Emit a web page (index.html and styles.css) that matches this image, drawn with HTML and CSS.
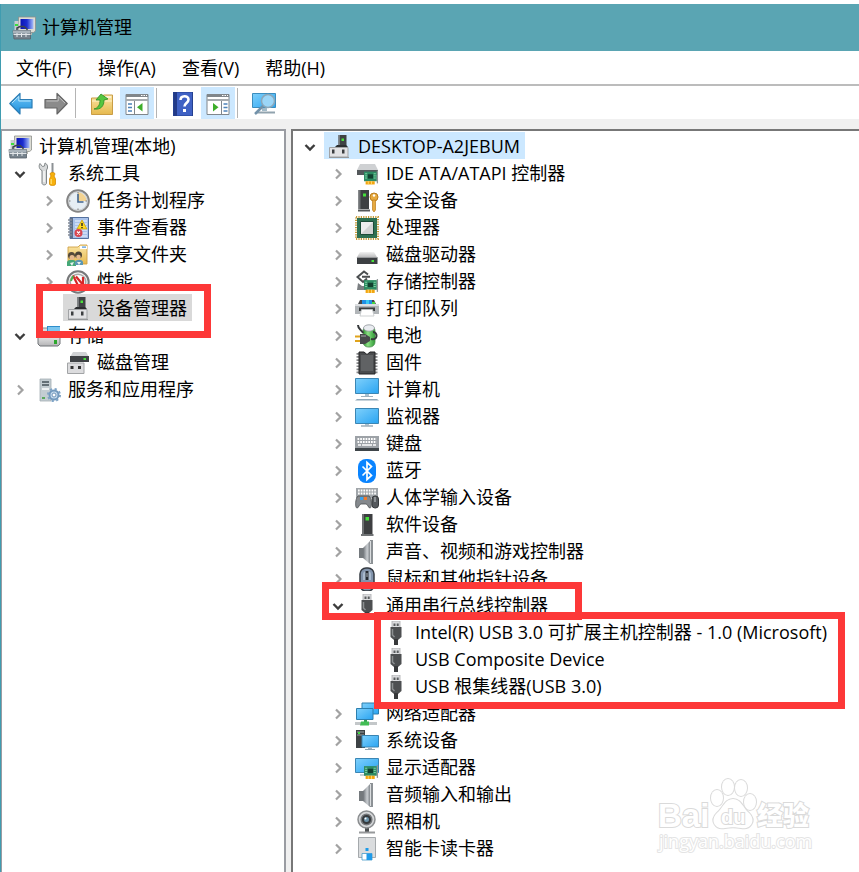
FILE: index.html
```html
<!DOCTYPE html>
<html lang="zh-CN">
<head>
  <meta charset="utf-8">
  <meta name="viewport" content="width=device-width, initial-scale=1">
  <title>计算机管理</title>
  <link rel="stylesheet" href="styles.css">
</head>
<body>

<!-- icon sprite -->
<svg class="sprite" aria-hidden="true">
  <defs>
    <linearGradient id="g-screen" x1="0" y1="0" x2="1" y2="1">
      <stop offset="0" stop-color="#7fd0fb"/><stop offset="1" stop-color="#29a4f2"/>
    </linearGradient>
    <linearGradient id="g-blue" x1="0" y1="0" x2="0" y2="1">
      <stop offset="0" stop-color="#6fc6f7"/><stop offset="1" stop-color="#1c8fdc"/>
    </linearGradient>
    <linearGradient id="g-navy" x1="0" y1="0" x2="1" y2="0">
      <stop offset="0" stop-color="#0a14b4"/><stop offset=".5" stop-color="#1c2ed0"/><stop offset="1" stop-color="#a9c0f8"/>
    </linearGradient>
    <linearGradient id="g-gray" x1="0" y1="0" x2="0" y2="1">
      <stop offset="0" stop-color="#f2f2f2"/><stop offset="1" stop-color="#b4b4b6"/>
    </linearGradient>
    <linearGradient id="g-steel" x1="0" y1="0" x2="1" y2="0">
      <stop offset="0" stop-color="#6c7176"/><stop offset=".6" stop-color="#c9cdd1"/><stop offset="1" stop-color="#83888d"/>
    </linearGradient>
    <linearGradient id="g-green" x1="0" y1="0" x2="1" y2="0">
      <stop offset="0" stop-color="#2d8f2f"/><stop offset=".4" stop-color="#8be084"/><stop offset="1" stop-color="#2f9a35"/>
    </linearGradient>
    <linearGradient id="g-folder" x1="0" y1="0" x2="0" y2="1">
      <stop offset="0" stop-color="#fbe6a6"/><stop offset="1" stop-color="#e6b94e"/>
    </linearGradient>
  </defs>

  <symbol id="closed" viewBox="0 0 12 12"><path d="M4 1.500 8.500 6 4 10.500" fill="none" stroke="#a2a2a2" stroke-width="2.200"/></symbol>
  <symbol id="open" viewBox="0 0 12 12"><path d="M1.500 4 6 8.500 10.500 4" fill="none" stroke="#3c3c3c" stroke-width="2.400"/></symbol>

  <symbol id="manage" viewBox="0 0 24 24">
    <path d="M6.500 1h17v14l-2 1.500H8L6.500 15z" fill="#dcdcd4" stroke="#8d8f8c" stroke-width=".8"/>
    <path d="M8.500 3h13v10h-13z" fill="url(#g-navy)"/>
    <path d="M10 17h10v2H10z" fill="#b4b4ae"/>
    <path d="M2.500 5h4v9h-4z" fill="#c9ccd0"/><path d="M3 8h3v2H3z" fill="#3be03b"/>
    <path d="M5 14v-2l3-1.500h4L15 13v2" fill="none" stroke="#3d454c" stroke-width="1.500"/>
    <path d="M1 14.500h17.500v8.500H2z" fill="#77838d" stroke="#56616a" stroke-width=".8"/>
    <path d="M1 14.500h17.500v3H1z" fill="#a9b3bb"/>
    <path d="M1.500 18.500h17M5 17v4M9.500 17v4M14 17v4" stroke="#e2e6e9" stroke-width="1"/>
  </symbol>

  <symbol id="tools" viewBox="0 0 24 24">
    <path d="M3 1.500 5.500 4.500 7.500 4 8 1c2.500 1 3.500 4.500 1.500 7v13c0 2.500-4.500 2.500-4.500 0V8.500C2 7.500 1.500 3.500 3 1.500z" fill="#d7d9da" stroke="#818688"/>
    <path d="M7 9v11" stroke="#fff" stroke-width="1.200"/>
    <path d="M15.500 1v10" stroke="#8c9194" stroke-width="2"/>
    <path d="M13 12c0-2 5-2 5 0l-1 2 1.500 3v5c0 2-6 2-6 0v-5l1.500-3z" fill="#f7b10c" stroke="#d48a00" stroke-width=".8"/>
    <path d="M14.200 17v5" stroke="#ffe178" stroke-width="1.200"/>
  </symbol>

  <symbol id="clock" viewBox="0 0 24 24">
    <circle cx="12" cy="12" r="10.800" fill="#dde7ee" stroke="#858585" stroke-width="2"/>
    <circle cx="12" cy="12" r="9.300" fill="#e6eef4" stroke="#c4c4c4" stroke-width=".8"/>
    <path d="M12 12V3.500a8.500 8.500 0 0 1 8.500 8.500z" fill="#f4d391"/>
    <path d="M12 5v8h5.500" fill="none" stroke="#41648d" stroke-width="1.600"/>
    <path d="M12 3v1.500M12 19.500V21M3 12h1.500M19.500 12H21" stroke="#777"/>
  </symbol>

  <symbol id="events" viewBox="0 0 24 24">
    <path d="M4 1.500h18.500v21H4z" fill="#a9c2ea" stroke="#54719f"/>
    <path d="M9 5h12M9 8h12M9 11h12M9 14h12M9 17h12M9 20h12" stroke="#eef4ff"/>
    <path d="M4 1.500h3v21H4z" fill="#5d6f8c"/>
    <path d="M2 4h4M2 7h4M2 10h4M2 13h4M2 16h4M2 19h4" stroke="#848b96" stroke-width="1.300"/>
    <path d="M16 4l5 9H11z" fill="#ffd91e" stroke="#c79b00" stroke-width=".7"/>
    <path d="M16 7v3M16 11v1.300" stroke="#222" stroke-width="1.400"/>
    <circle cx="12.500" cy="17" r="4" fill="#d8454f"/><path d="M11 15.500l3 3m0-3-3 3" stroke="#fff" stroke-width="1.200"/>
  </symbol>

  <symbol id="share" viewBox="0 0 24 24">
    <path d="M2 4h10l2-2h7v19H2z" fill="url(#g-folder)" stroke="#cfa045" stroke-width=".9"/>
    <path d="M14 3h7v3h-7z" fill="#fff"/><path d="M16 3.500h4v1.200h-4z" fill="#4c92d8"/>
    <path d="M1 23v-4c1-3 8-3 9 0v4z" fill="#45a878"/><path d="M9 22v-3c1-3 7-3 8 0v3z" fill="#5b97b4"/>
    <path d="M4 20l2 3 2-4zM11 19l2 3 2-3z" fill="#e9f2ee"/>
    <circle cx="5.500" cy="12.500" r="3.500" fill="#54493a"/><circle cx="6" cy="14.500" r="2.500" fill="#e5b98d"/>
    <circle cx="12.500" cy="12" r="3.500" fill="#4b4336"/><circle cx="12.500" cy="14" r="2.300" fill="#e5b98d"/>
  </symbol>

  <symbol id="perf" viewBox="0 0 24 24">
    <circle cx="12" cy="12" r="10.700" fill="#f2f2f0" stroke="#77787a" stroke-width="2"/>
    <circle cx="12" cy="12" r="7.800" fill="#fff" stroke="#a9a9a9" stroke-width="1.500"/>
    <path d="M7 5.500l6 12M10 6.500l8 9.500M17 7v10" fill="none" stroke="#d62727" stroke-width="2.200"/>
    <path d="M5 11l2-5" stroke="#4bb24c" stroke-width="2"/>
  </symbol>

  <symbol id="device" viewBox="0 0 24 24">
    <path d="M11.500 0h8v12h-8z" fill="#3f4244"/><path d="M11.500 0h1.500v12h-1.500z" fill="#777a7c"/>
    <path d="M14.500 3.500H17V6h-2.500z" fill="#4be23c"/>
    <path d="M10 10h9l2 2H8z" fill="#2c2e30"/>
    <path d="M2.500 12.500h18.500V22H2.500z" fill="#e2e2e4" stroke="#a2a4a6"/>
    <path d="M5 14.500h2.500v4H5zM15 14.500h2.500v4H15z" fill="#3c3e40"/>
    <path d="M2 22.500h20" stroke="#96989a" stroke-width="1"/>
  </symbol>

  <symbol id="storage" viewBox="0 0 24 24">
    <path d="M2 8l3-4h8l3 4v4H2z" fill="#d8dadc" stroke="#85888b"/>
    <path d="M10 2h13v9H10z" fill="#2e8ecb"/><path d="M11 3h12v4H11z" fill="#7cc6ef"/>
    <path d="M1 10h22v10l-2 2H3l-2-2z" fill="url(#g-gray)" stroke="#717478"/>
    <path d="M17 16h3v4h-3z" fill="#2da82d"/>
  </symbol>

  <symbol id="diskmgmt" viewBox="0 0 24 24">
    <path d="M7 1h13l3 5H4z" fill="#d0d2d4"/><path d="M4 5h19v6H4z" fill="#3f4245"/>
    <path d="M17.500 7H20v2h-2.500z" fill="#47df3c"/>
    <path d="M1.500 12h16.500v10.500H1.500z" fill="#dcdcde" stroke="#a2a4a6"/>
    <path d="M4.500 15h3v3h-3zM12 15h3v3h-3z" fill="#333"/>
  </symbol>

  <symbol id="services" viewBox="0 0 24 24">
    <path d="M3 1h11v22H3z" fill="#c3cdd2" stroke="#a3adb3" stroke-width=".8"/>
    <path d="M5 4h7M5 7h7" stroke="#46525a" stroke-width="1.300"/><path d="M5 10h7v2H5z" fill="#eef2f4"/>
    <path d="M5 19h3v2H5z" fill="#5aa95c"/>
    <circle cx="17" cy="17" r="4.500" fill="#c7dcef" stroke="#7399bd" stroke-width="2"/>
    <circle cx="17" cy="17" r="6" fill="none" stroke="#7ea3c5" stroke-width="2" stroke-dasharray="2.200 2.500"/>
    <circle cx="17" cy="17" r="2" fill="#fff" stroke="#6f94b8"/>
  </symbol>

  <symbol id="card" viewBox="0 0 14 13">
    <path d="M0 1h12v9H0z" fill="#2e8b63"/><path d="M12.500 0v12" stroke="#8f9596" stroke-width="1.200"/>
    <path d="M3.500 3.500h5v4h-5z" fill="#12402f"/><path d="M1 3h2M1 5h2M1 7h2M9 3h2M9 5h2M9 7h2" stroke="#8be0ae" stroke-width=".8"/>
    <path d="M1.500 10h8.500v3H1.500z" fill="#f2a50e"/><path d="M4 10v3M7 10v3" stroke="#ffdc77" stroke-width=".8"/>
  </symbol>

  <symbol id="ide" viewBox="0 0 24 24">
    <path d="M5 2h15l3 6H2z" fill="#cfd1d3"/><path d="M2 8h21v5H2z" fill="#54585b"/>
    <use href="#card" x="9" y="8" width="15" height="15"/>
  </symbol>

  <symbol id="security" viewBox="0 0 24 24">
    <path d="M3.500 1H14v19H3.500z" fill="#3d4042"/><path d="M3.500 1h2v19h-2z" fill="#6f7275"/>
    <path d="M8 4.500h3v3H8z" fill="#46e03c"/><path d="M3 21.500h12" stroke="#55585a" stroke-width="2"/>
    <circle cx="19" cy="8" r="4" fill="#e7aa3f" stroke="#ba7d1e"/><circle cx="19" cy="6.500" r="1.200" fill="#fff"/>
    <path d="M17.500 11h3v10l-1.500 2-1.500-2z" fill="#e7aa3f" stroke="#ba7d1e" stroke-width=".7"/>
  </symbol>

  <symbol id="cpu" viewBox="0 0 24 24">
    <path d="M1 1h22v22H1z" fill="none" stroke="#c69a38" stroke-width="2" stroke-dasharray="1.200 1.200"/>
    <path d="M2 2h20v20H2z" fill="#2e7052"/><path d="M5.500 5.500h13v13h-13z" fill="#d2d4d4" stroke="#1d4c38"/>
    <path d="M6 18V6h12z" fill="#eeeeee"/>
  </symbol>

  <symbol id="disk" viewBox="0 0 24 24">
    <path d="M5 9h14l3.500 6h-21z" fill="url(#g-gray)"/><path d="M2 14.500h20.500V21H2z" fill="#3d4043"/>
    <path d="M2 14.500h20.500" stroke="#97999b"/><path d="M16.500 17H19v2h-2.500z" fill="#49e33d"/>
  </symbol>

  <symbol id="storctl" viewBox="0 0 24 24">
    <path d="M13 4.500 9 1.500 2.500 7l5.500 5 4-3.500M7 6.800h8" fill="none" stroke="#4b4e50" stroke-width="2"/>
    <path d="M3 13l4 3h5v4H2z" fill="#7b7f82"/>
    <use href="#card" x="9" y="9" width="15" height="14"/>
  </symbol>

  <symbol id="printer" viewBox="0 0 24 24">
    <path d="M5 3h14l2 4H3z" fill="#47484a"/><path d="M7 3h10v5H7z" fill="#1f8ee5"/><path d="M11 3h3v5h-3z" fill="#38c7f0"/><path d="M17 5h3v3h-3z" fill="#45d642"/>
    <path d="M0 7h24v10H0z" fill="#b1b5b8"/><path d="M0 7h24v2H0z" fill="#dcdee0"/>
    <path d="M4 10.500h16V14H4z" fill="#383b3d"/><path d="M6.500 12.500h11l1.500 6.500H5z" fill="#fff" stroke="#c2c5c7" stroke-width=".8"/>
  </symbol>

  <symbol id="battery" viewBox="0 0 24 24">
    <rect x="8" y="2" width="12" height="21" rx="5" fill="url(#g-green)" stroke="#4e8d50" stroke-width=".8"/>
    <ellipse cx="14" cy="4" rx="5.500" ry="3.200" fill="#e9ecf0" stroke="#8f949a" stroke-width=".8"/>
    <path d="M3 1c0 5 4 5 5 8M16 15c7 2 7-7 2-7" fill="none" stroke="#35383a" stroke-width="2"/>
    <path d="M0 12.500h6M0 17h6" stroke="#e0a31c" stroke-width="1.800"/>
    <path d="M5 10h5l5 3v4l-5 3H5z" fill="#47494b"/><path d="M6 12h5" stroke="#a2a5a7"/>
  </symbol>

  <symbol id="chip" viewBox="0 0 24 24">
    <path d="M3 2v21M21 2v21" stroke="#88898b" stroke-width="3" stroke-dasharray="1.700 1.400"/>
    <path d="M4 1h5l3 2.500L15 1h5v22H4z" fill="#4a4c4e" stroke="#242527"/><path d="M6 4h12v16H6z" fill="#606264"/>
  </symbol>

  <symbol id="computer" viewBox="0 0 24 24">
    <path d="M.5.5h23v15H.5z" fill="url(#g-screen)" stroke="#3b86b4"/>
    <path d="M10 16h4v2h-4z" fill="#a9c1d0"/><path d="M6 18.500h12" stroke="#9fb0bc"/>
    <path d="M2 21h20l2 1.500H0z" fill="#8fa7b7"/>
  </symbol>

  <symbol id="monitor" viewBox="0 0 24 24">
    <path d="M.5 3.500h23v15H.5z" fill="url(#g-screen)" stroke="#3b86b4"/>
    <path d="M10 19h4v1.500h-4z" fill="#a9c1d0"/><path d="M6 21h12" stroke="#8fa1ad" stroke-width="1.300"/>
  </symbol>

  <symbol id="keyboard" viewBox="0 0 24 24">
    <path d="M0 4h24v13H0z" fill="#9da2a7"/><path d="M0 16h24v3H0z" fill="#3f4549"/>
    <path d="M2.500 7h19M2.500 10h19" stroke="#fff" stroke-width="2" stroke-dasharray="1.700 1"/><path d="M3 13h3m1 0h10m1 0h3" stroke="#fff" stroke-width="1.700"/>
  </symbol>

  <symbol id="bluetooth" viewBox="0 0 24 24">
    <rect x="3" y="0" width="18" height="24" rx="8" fill="#0a84ff"/>
    <path d="M7.500 7.500l9 9-4.500 4v-17l4.500 4-9 9" fill="none" stroke="#fff" stroke-width="1.700"/>
  </symbol>

  <symbol id="hid" viewBox="0 0 24 24">
    <path d="M1 2h22v10H1z" fill="#a1a6aa"/><path d="M3 4.500h18M3 7.500h18" stroke="#fff" stroke-width="1.800" stroke-dasharray="1.700 1"/>
    <path d="M3 10h11c3 3 3 12 1 12s-2-4-4-4H6c-2 0-2 4-4 4S0 13 3 10z" fill="#85898d" stroke="#4a4e51" stroke-width=".8"/>
    <path d="M5 11h3v3H5z" fill="#3aa2ee"/><path d="M9 11h3v3H9z" fill="#f27a2c"/>
    <rect x="17" y="10" width="6.500" height="12" rx="3" fill="#55595d" stroke="#373a3d"/><path d="M20 11v5" stroke="#c6ccd0"/>
  </symbol>

  <symbol id="software" viewBox="0 0 24 24">
    <path d="M7 1h10.500v20H7z" fill="#3d3f41"/><path d="M7 1h2v20H7z" fill="#6e7173"/>
    <path d="M10.500 4h3.500v3.500h-3.500z" fill="#46e03c"/><path d="M6 22h12.500" stroke="#707375" stroke-width="2"/>
  </symbol>

  <symbol id="speaker" viewBox="0 0 24 24">
    <path d="M4 8h6v10H4z" fill="#74797d"/><path d="M8 8 15 1v23l-7-6z" fill="url(#g-steel)"/>
    <path d="M15 0h3v24h-3z" fill="#8c9195"/><path d="M15.500 1v22" stroke="#dadddf"/>
  </symbol>

  <symbol id="mouse" viewBox="0 0 24 24">
    <rect x="5" y="1" width="14" height="23" rx="6" fill="#8294ac" stroke="#343a42" stroke-width="1.500"/>
    <path d="M8 13V7c0-4 8-4 8 0v6" fill="#a9bacd"/><path d="M12 4v9" stroke="#252a31" stroke-width="3"/><path d="M12 6v4" stroke="#aeb6be"/>
  </symbol>

  <symbol id="usb" viewBox="0 0 24 24">
    <path d="M8 0h8v7H8z" fill="#dcdddf" stroke="#a9abad" stroke-width=".8"/>
    <path d="M9.500 2.500h2V5h-2zM12.700 2.500h2V5h-2z" fill="#595c5e"/>
    <path d="M6.500 6h11v10L14 19h-4l-3.500-3z" fill="#4d4f51"/>
    <path d="M8.500 8v6l2 2" fill="none" stroke="#8c8f91" stroke-width="1.500"/><path d="M10 18h4v6h-4z" fill="#38393b"/>
  </symbol>

  <symbol id="network" viewBox="0 0 24 24">
    <path d="M7 1h16.500v11H7z" fill="url(#g-screen)" stroke="#2c7fae"/>
    <path d="M1.500 6.500h16.500v11H1.500z" fill="url(#g-screen)" stroke="#2c7fae"/>
    <path d="M9 18h3v2H9z" fill="#35a052"/><path d="M0 21.500h22" stroke="#c3c7c9" stroke-width="3"/><path d="M6 19.500h8v4H5z" fill="#42bd54"/>
  </symbol>

  <symbol id="system" viewBox="0 0 24 24">
    <path d="M1 1h9v18H1z" fill="#3d4245"/><path d="M2 3h7M2 6h7" stroke="#9da2a5"/><path d="M3 3h2v2H3z" fill="#42dc42"/>
    <path d="M7 6.500h16.500V18H7z" fill="url(#g-screen)" stroke="#3984b2"/>
    <path d="M13 18.500h4V20h-4z" fill="#9eb4c2"/><path d="M10 20.500h10" stroke="#8ea1ae"/>
  </symbol>

  <symbol id="display" viewBox="0 0 24 24">
    <path d="M.5 2.500h23v14H.5z" fill="url(#g-screen)" stroke="#3b86b4"/>
    <path d="M5 19h6" stroke="#8fa1ad"/><use href="#card" x="9" y="9" width="15" height="14"/>
  </symbol>

  <symbol id="camera" viewBox="0 0 24 24">
    <path d="M10 16h4v6h-4z" fill="#4d5052"/><path d="M4 22.500h16" stroke="#97999b" stroke-width="2"/>
    <circle cx="11.500" cy="9.500" r="8.500" fill="#d4d6d8" stroke="#8a8d8f" stroke-width="1.500"/>
    <circle cx="11.500" cy="9.500" r="5.300" fill="#35393c" stroke="#737679" stroke-width="1.500"/><circle cx="11.500" cy="9.500" r="2.500" fill="#6c93aa"/><circle cx="10.500" cy="8.500" r="1" fill="#fff"/>
  </symbol>

  <symbol id="smartcard" viewBox="0 0 24 24">
    <path d="M3.500.5h17v20h-17z" fill="#dadcde" stroke="#a5a9ac"/>
    <path d="M10.500 11h3v3h-3z" fill="#1d9be8"/><path d="M7 16.500h10V23H7z" fill="#fff" stroke="#4599c9" stroke-width=".8"/><path d="M11.500 16.500H17V23h-5.500z" fill="#1e9bea"/>
  </symbol>

  <symbol id="back" viewBox="0 0 24 24"><path d="M.8 11.500 11 1.500v6h12v8.500H11v6z" fill="url(#g-blue)" stroke="#2c7db5" stroke-width="1.200" stroke-linejoin="round"/><path d="M3 11 9.800 4.500V9h11.700" fill="none" stroke="#b9e6fc"/></symbol>
  <symbol id="forward" viewBox="0 0 24 24"><path d="M23.200 11.500 13 1.500v6H1v8.500h12v6z" fill="#8b8b8b" stroke="#666" stroke-width="1.200" stroke-linejoin="round"/><path d="M2.500 9H14.200V4.500L21 11" fill="none" stroke="#c1c1c1"/></symbol>

  <symbol id="up" viewBox="0 0 24 24">
    <path d="M1.500 6h10l2-3h9v19.500h-21z" fill="url(#g-folder)" stroke="#c99d45"/><path d="M15 5h6" stroke="#fff"/><path d="M2 9h20" stroke="#fff1c6"/>
    <path d="M4 17c4-1 6-4 6-9H6l5-6 7 5-4 1c0 6-3 10-10 9z" fill="#55c63f" stroke="#2c8b24" stroke-width=".8"/>
  </symbol>
  <symbol id="treeview" viewBox="0 0 24 24">
    <path d="M1 2.500h22v20H1z" fill="#fff" stroke="#80868b"/><path d="M1 2h22v3H1z" fill="#80868b"/>
    <path d="M1 7h22v2H1z" fill="#a6abaf"/><path d="M16 3.500h1.500m1 0H20m1 0h1" stroke="#fff"/>
    <path d="M9.500 9v13" stroke="#80868b"/><path d="M3 12h4M3 15.500h4M3 19h4" stroke="#4d83b9" stroke-width="1.700"/>
    <path d="M17.500 11v8.500L12 15.300z" fill="#3eae2b"/>
  </symbol>
  <symbol id="help" viewBox="0 0 24 24">
    <path d="M2.500 0h19v24h-19z" fill="#3f61c4" stroke="#25408f"/><path d="M3 0h3v24H3z" fill="#223a88"/>
    <path d="M9.500 8c0-5 8-5 8-.5 0 3.500-4 3.500-4 7" fill="none" stroke="#fff" stroke-width="2.600"/><path d="M12 17h3v3h-3z" fill="#fff"/>
  </symbol>
  <symbol id="actions" viewBox="0 0 24 24">
    <path d="M1 2.500h22v20H1z" fill="#fff" stroke="#80868b"/><path d="M1 2h22v3H1z" fill="#80868b"/>
    <path d="M1 7h22v2H1z" fill="#a6abaf"/><path d="M16 3.500h1.500m1 0H20m1 0h1" stroke="#fff"/>
    <path d="M15.500 9v13" stroke="#80868b"/><path d="M17.500 12h4M17.500 15.500h4M17.500 19h4" stroke="#4d83b9" stroke-width="1.700"/>
    <path d="M7 11v8.500l5.500-4.200z" fill="#3eae2b"/>
  </symbol>
  <symbol id="scan" viewBox="0 0 24 24">
    <path d="M.5 1.500h23v14H.5z" fill="url(#g-screen)" stroke="#3b8dbe"/><path d="M10 16h5v3h-5z" fill="#a2bac8"/><path d="M4 20.500h19" stroke="#91a3ae" stroke-width="2"/>
    <circle cx="16" cy="9" r="6.500" fill="#9bd6f8" stroke="#8ba7b9" stroke-width="1.500"/><path d="M11 14l-8 8" stroke="#7292aa" stroke-width="2.500"/>
  </symbol>
</svg>

<div class="window">
  <header class="titlebar">
    <svg class="icon"><use href="#manage"/></svg>
    <h1>计算机管理</h1>
  </header>

  <nav class="menubar">
    <button>文件(F)</button>
    <button>操作(A)</button>
    <button>查看(V)</button>
    <button>帮助(H)</button>
  </nav>

  <div class="toolbar">
    <button aria-label="后退"><svg class="icon"><use href="#back"/></svg></button>
    <button aria-label="前进"><svg class="icon"><use href="#forward"/></svg></button>
    <span class="sep"></span>
    <button aria-label="向上"><svg class="icon"><use href="#up"/></svg></button>
    <button class="on" aria-label="显示控制台树"><svg class="icon"><use href="#treeview"/></svg></button>
    <span class="sep"></span>
    <button aria-label="帮助"><svg class="icon"><use href="#help"/></svg></button>
    <button class="on" aria-label="显示操作窗格"><svg class="icon"><use href="#actions"/></svg></button>
    <span class="sep"></span>
    <button aria-label="扫描"><svg class="icon"><use href="#scan"/></svg></button>
  </div>

  <main class="panes">
    <section class="pane console">
      <div class="row"><span class="item"><svg class="icon"><use href="#manage"/></svg><span>计算机管理(本地)</span></span></div>
      <ul class="tree">
        <li>
          <div class="row"><button class="twisty" aria-label="折叠"><svg><use href="#open"/></svg></button><span class="item"><svg class="icon"><use href="#tools"/></svg><span>系统工具</span></span></div>
          <ul>
            <li class="row"><button class="twisty" aria-label="展开"><svg><use href="#closed"/></svg></button><span class="item"><svg class="icon"><use href="#clock"/></svg><span>任务计划程序</span></span></li>
            <li class="row"><button class="twisty" aria-label="展开"><svg><use href="#closed"/></svg></button><span class="item"><svg class="icon"><use href="#events"/></svg><span>事件查看器</span></span></li>
            <li class="row"><button class="twisty" aria-label="展开"><svg><use href="#closed"/></svg></button><span class="item"><svg class="icon"><use href="#share"/></svg><span>共享文件夹</span></span></li>
            <li class="row"><button class="twisty" aria-label="展开"><svg><use href="#closed"/></svg></button><span class="item"><svg class="icon"><use href="#perf"/></svg><span>性能</span></span></li>
            <li class="row leaf"><span class="item current"><svg class="icon"><use href="#device"/></svg><span>设备管理器</span></span></li>
          </ul>
        </li>
        <li>
          <div class="row"><button class="twisty" aria-label="折叠"><svg><use href="#open"/></svg></button><span class="item"><svg class="icon"><use href="#storage"/></svg><span>存储</span></span></div>
          <ul>
            <li class="row leaf"><span class="item"><svg class="icon"><use href="#diskmgmt"/></svg><span>磁盘管理</span></span></li>
          </ul>
        </li>
        <li class="row"><button class="twisty" aria-label="展开"><svg><use href="#closed"/></svg></button><span class="item"><svg class="icon"><use href="#services"/></svg><span>服务和应用程序</span></span></li>
      </ul>
      <span class="mark mark-manager"></span>
    </section>

    <section class="pane devices">
      <div class="row"><button class="twisty" aria-label="折叠"><svg><use href="#open"/></svg></button><span class="item selected"><svg class="icon"><use href="#device"/></svg><span>DESKTOP-A2JEBUM</span></span></div>
      <ul>
        <li class="row"><button class="twisty" aria-label="展开"><svg><use href="#closed"/></svg></button><span class="item"><svg class="icon"><use href="#ide"/></svg><span>IDE ATA/ATAPI 控制器</span></span></li>
        <li class="row"><button class="twisty" aria-label="展开"><svg><use href="#closed"/></svg></button><span class="item"><svg class="icon"><use href="#security"/></svg><span>安全设备</span></span></li>
        <li class="row"><button class="twisty" aria-label="展开"><svg><use href="#closed"/></svg></button><span class="item"><svg class="icon"><use href="#cpu"/></svg><span>处理器</span></span></li>
        <li class="row"><button class="twisty" aria-label="展开"><svg><use href="#closed"/></svg></button><span class="item"><svg class="icon"><use href="#disk"/></svg><span>磁盘驱动器</span></span></li>
        <li class="row"><button class="twisty" aria-label="展开"><svg><use href="#closed"/></svg></button><span class="item"><svg class="icon"><use href="#storctl"/></svg><span>存储控制器</span></span></li>
        <li class="row"><button class="twisty" aria-label="展开"><svg><use href="#closed"/></svg></button><span class="item"><svg class="icon"><use href="#printer"/></svg><span>打印队列</span></span></li>
        <li class="row"><button class="twisty" aria-label="展开"><svg><use href="#closed"/></svg></button><span class="item"><svg class="icon"><use href="#battery"/></svg><span>电池</span></span></li>
        <li class="row"><button class="twisty" aria-label="展开"><svg><use href="#closed"/></svg></button><span class="item"><svg class="icon"><use href="#chip"/></svg><span>固件</span></span></li>
        <li class="row"><button class="twisty" aria-label="展开"><svg><use href="#closed"/></svg></button><span class="item"><svg class="icon"><use href="#computer"/></svg><span>计算机</span></span></li>
        <li class="row"><button class="twisty" aria-label="展开"><svg><use href="#closed"/></svg></button><span class="item"><svg class="icon"><use href="#monitor"/></svg><span>监视器</span></span></li>
        <li class="row"><button class="twisty" aria-label="展开"><svg><use href="#closed"/></svg></button><span class="item"><svg class="icon"><use href="#keyboard"/></svg><span>键盘</span></span></li>
        <li class="row"><button class="twisty" aria-label="展开"><svg><use href="#closed"/></svg></button><span class="item"><svg class="icon"><use href="#bluetooth"/></svg><span>蓝牙</span></span></li>
        <li class="row"><button class="twisty" aria-label="展开"><svg><use href="#closed"/></svg></button><span class="item"><svg class="icon"><use href="#hid"/></svg><span>人体学输入设备</span></span></li>
        <li class="row"><button class="twisty" aria-label="展开"><svg><use href="#closed"/></svg></button><span class="item"><svg class="icon"><use href="#software"/></svg><span>软件设备</span></span></li>
        <li class="row"><button class="twisty" aria-label="展开"><svg><use href="#closed"/></svg></button><span class="item"><svg class="icon"><use href="#speaker"/></svg><span>声音、视频和游戏控制器</span></span></li>
        <li class="row"><button class="twisty" aria-label="展开"><svg><use href="#closed"/></svg></button><span class="item"><svg class="icon"><use href="#mouse"/></svg><span>鼠标和其他指针设备</span></span></li>
        <li>
          <div class="row"><button class="twisty" aria-label="折叠"><svg><use href="#open"/></svg></button><span class="item"><svg class="icon"><use href="#usb"/></svg><span>通用串行总线控制器</span></span></div>
          <ul>
            <li class="row leaf"><span class="item"><svg class="icon"><use href="#usb"/></svg><span>Intel(R) USB 3.0 可扩展主机控制器 - 1.0 (Microsoft)</span></span></li>
            <li class="row leaf"><span class="item"><svg class="icon"><use href="#usb"/></svg><span>USB Composite Device</span></span></li>
            <li class="row leaf"><span class="item"><svg class="icon"><use href="#usb"/></svg><span>USB 根集线器(USB 3.0)</span></span></li>
          </ul>
        </li>
        <li class="row"><button class="twisty" aria-label="展开"><svg><use href="#closed"/></svg></button><span class="item"><svg class="icon"><use href="#network"/></svg><span>网络适配器</span></span></li>
        <li class="row"><button class="twisty" aria-label="展开"><svg><use href="#closed"/></svg></button><span class="item"><svg class="icon"><use href="#system"/></svg><span>系统设备</span></span></li>
        <li class="row"><button class="twisty" aria-label="展开"><svg><use href="#closed"/></svg></button><span class="item"><svg class="icon"><use href="#display"/></svg><span>显示适配器</span></span></li>
        <li class="row"><button class="twisty" aria-label="展开"><svg><use href="#closed"/></svg></button><span class="item"><svg class="icon"><use href="#speaker"/></svg><span>音频输入和输出</span></span></li>
        <li class="row"><button class="twisty" aria-label="展开"><svg><use href="#closed"/></svg></button><span class="item"><svg class="icon"><use href="#camera"/></svg><span>照相机</span></span></li>
        <li class="row"><button class="twisty" aria-label="展开"><svg><use href="#closed"/></svg></button><span class="item"><svg class="icon"><use href="#smartcard"/></svg><span>智能卡读卡器</span></span></li>
      </ul>
      <span class="mark mark-usb"></span>
      <span class="mark mark-ports"></span>

      <svg class="watermark" viewBox="0 0 160 80">
        <text class="brand" x="2" y="49">Bai</text>
        <g class="paw">
          <ellipse cx="61" cy="20" rx="6" ry="8"/><ellipse cx="72" cy="9" rx="6" ry="8"/>
          <ellipse cx="85" cy="10" rx="6" ry="8"/><ellipse cx="94" cy="24" rx="6" ry="8"/>
          <path d="M77 21c-8 0-10 9-16 14-8 8-1 17 8 15 6-1 10-1 16 0 9 2 16-7 8-15-6-5-8-14-16-14z"/>
        </g>
        <text class="du" x="65" y="46">du</text>
        <text class="cn" x="101" y="47">经验</text>
        <text class="url" x="3" y="70">jingyan.baidu.com</text>
      </svg>
    </section>
  </main>
</div>

</body>
</html>
```

FILE: styles.css
```css
* {
  box-sizing: border-box;
}

body {
  margin: 0;
  padding-top: 4px;
  background: #fff;
  color: #000;
  font-family: "Open Sans", "Noto Sans CJK SC", sans-serif;
  font-size: 18px;
  line-height: 27px;
}

button {
  padding: 0;
  border: 0;
  background: none;
  color: inherit;
  font: inherit;
}

ul {
  margin: 0;
  padding: 0;
  list-style: none;
}

.sprite {
  position: absolute;
  width: 0;
  height: 0;
}

.icon {
  display: block;
  flex: none;
  width: 24px;
  height: 24px;
}

.window {
  display: flex;
  flex-direction: column;
  min-height: calc(100vh - 4px);
  border-left: 1px solid #3f9cb0;
}

.titlebar {
  display: flex;
  align-items: center;
  gap: 6px;
  height: 47px;
  padding-left: 11px;
  background: #5aa5b3;
}

.titlebar h1 {
  margin: 0;
  font-size: 18px;
  font-weight: normal;
}

.menubar {
  display: flex;
  gap: 26px;
  padding: 4px 15px 2px;
}

.toolbar {
  display: flex;
  gap: 1px;
  height: 35px;
  padding: 1px 3px 0;
  border-top: 2px solid #bcbcbc;
}

.toolbar button {
  display: flex;
  align-items: center;
  justify-content: center;
  width: 34px;
  padding-top: 2px;
}

.toolbar .on {
  background: #cce8ff;
}

.sep {
  width: 1px;
  margin: 1px 8px 1px 1px;
  background: #b4b4b4;
}

.panes {
  display: grid;
  grid-template-columns: 285px 1fr;
  gap: 5px;
  flex: 1;
  padding-top: 10px;
  background: #f0f0f0;
}

.pane {
  position: relative;
  min-width: 0;
  background: #fff;
}

.console {
  padding: 1px 0 0 3px;
  border: 2px solid #9a9ca2;
  border-width: 2px 2px 0 1px;
}

.devices {
  padding: 1px 0 10px 2px;
  border: 2px solid #777;
  border-width: 2px 0 0 2px;
}

.devices ul {
  padding-left: 28px;
}

.pane ul ul {
  padding-left: 29px;
}

.row {
  display: flex;
  height: 27px;
  white-space: nowrap;
}

.twisty {
  display: flex;
  align-items: center;
  justify-content: center;
  width: 29px;
  padding-top: 3px;
}

.twisty svg {
  width: 12px;
  height: 12px;
}

.leaf {
  padding-left: 29px;
}

.item {
  display: flex;
  align-items: center;
  gap: 7px;
  padding: 2px 5px 0 3px;
}

.current {
  background: #d9d9d9;
}

.selected {
  background: #cce8ff;
}

/* red call-outs over the tree */
.mark {
  position: absolute;
  border: 7px solid #fd3838;
}

.mark-manager {
  top: 153px;
  left: 34px;
  width: 175px;
  height: 54px;
}

.mark-usb {
  top: 451px;
  left: 29px;
  width: 260px;
  height: 38px;
}

.mark-ports {
  top: 481px;
  left: 81px;
  width: 471px;
  height: 97px;
}

.watermark {
  position: absolute;
  right: 43px;
  bottom: 14px;
  width: 160px;
  height: 80px;
}

.watermark text,
.paw {
  fill: #fff;
  stroke: #dadada;
  stroke-width: 2px;
  paint-order: stroke;
}

.watermark .brand {
  font: bold 33px "Liberation Sans", sans-serif;
}

.watermark .du {
  font: bold 20px "Liberation Sans", sans-serif;
}

.watermark .cn {
  font: 900 26px "Noto Sans CJK SC", sans-serif;
}

.watermark .url {
  font: 18px "Open Sans", sans-serif;
  stroke: #e4e4e4;
}
```
